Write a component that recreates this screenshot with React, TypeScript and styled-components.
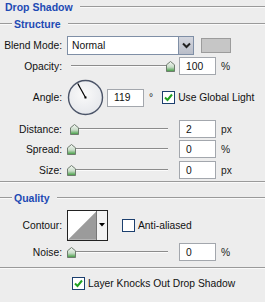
import { createGlobalStyle } from "styled-components";
import styled from "styled-components";

const GlobalStyle = createGlobalStyle`
  html, body {
    margin: 0;
    padding: 0;
    background: #ededed;
  }
`;

const Panel = styled.div`
  width: 265px;
  height: 302px;
  overflow: hidden;
  background: #ededed;
  font-family: "Liberation Sans", Arial, sans-serif;
  font-size: 10.3px;
  color: #111;
  display: flex;
  flex-direction: column;
`;

const Legend = styled.div<{ $top: number; $indent?: boolean }>`
  display: flex;
  align-items: center;
  height: 14px;
  margin-top: ${(p) => p.$top}px;
  padding-left: ${(p) => (p.$indent ? 0 : 5)}px;
`;

const Rule = styled.div<{ $width?: number }>`
  height: 1px;
  background: #9a9a9a;
  border-bottom: 1px solid #fafafa;
  ${(p) => (p.$width ? `width: ${p.$width}px;` : "flex: 1;")}
`;

const LegendText = styled.span<{ $big?: boolean }>`
  color: #1d4ab4;
  font-weight: bold;
  font-size: 10.5px;
  margin: 0 7px 0 ${(p) => (p.$big ? 0 : 2)}px;
  white-space: nowrap;
`;

const Row = styled.div<{ $top: number; $height: number }>`
  display: grid;
  grid-template-columns: 62px auto;
  column-gap: 5px;
  align-items: center;
  height: ${(p) => p.$height}px;
  margin-top: ${(p) => p.$top}px;
`;

const Label = styled.span`
  text-align: right;
  white-space: nowrap;
`;

const Controls = styled.div`
  display: flex;
  align-items: center;
`;

const SelectBox = styled.div`
  width: 106px;
  height: 17px;
  border: 1px solid #7f8fa6;
  background: #fff;
  display: flex;
  align-items: center;
  padding-left: 4px;
`;

const SelectButton = styled.div`
  width: 15px;
  height: 19px;
  box-sizing: border-box;
  border: 1px solid #7f8fa6;
  border-left: none;
  background: linear-gradient(#d4d7df, #b9bdc8);
  display: flex;
  align-items: center;
  justify-content: center;
`;

const Swatch = styled.div`
  width: 28px;
  height: 13px;
  margin-left: 7px;
  background: #c6c6c6;
  border: 1px solid #9c9c9c;
`;

const SliderBox = styled.div`
  position: relative;
  width: 108px;
  height: 18px;
`;

const Track = styled.div`
  position: absolute;
  left: 4px;
  right: 7px;
  top: 8px;
  height: 1px;
  background: #8c8c8c;
  border-bottom: 1px solid #fbfbfb;
`;

const Thumb = styled.svg`
  position: absolute;
  top: 4px;
`;

const NumInput = styled.div<{ $gap?: number }>`
  height: 16px;
  width: 29px;
  margin-left: ${(p) => p.$gap ?? 4}px;
  background: #fff;
  border: 1px solid #a3a7ad;
  display: flex;
  align-items: center;
  padding-left: 6px;
`;

const Unit = styled.span`
  margin-left: 5px;
  color: #222;
`;

const CheckWrap = styled.label<{ $gap: number }>`
  display: flex;
  align-items: center;
  margin-left: ${(p) => p.$gap}px;
  white-space: nowrap;
`;

const Box = styled.span`
  width: 11px;
  height: 11px;
  border: 1px solid #1c3f6e;
  background: #fff;
  margin-right: 3px;
  display: flex;
  align-items: center;
  justify-content: center;
`;

const ContourBox = styled.div`
  display: flex;
  width: 41px;
  height: 31px;
  box-sizing: border-box;
  border: 1px solid #222;
  background: #fff;
`;

const ContourArrow = styled.div`
  width: 10px;
  border-left: 1px solid #777;
  background: #f3f3f3;
  display: flex;
  align-items: center;
  justify-content: center;
`;

const CheckRow = styled.div`
  display: flex;
  align-items: center;
  height: 13px;
  margin-top: 8px;
  padding-left: 72px;
`;

function Slider({ value }: { value: number }) {
  const left = (value / 100) * 99;
  return (
    <SliderBox>
      <Track />
      <Thumb width="9" height="11" viewBox="0 0 9 11" style={{ left }}>
        <defs>
          <linearGradient id="tg" x1="0" y1="0" x2="0" y2="1">
            <stop offset="0" stopColor="#f4f7f4" />
            <stop offset="0.55" stopColor="#c8dcc8" />
            <stop offset="1" stopColor="#3c9a3c" />
          </linearGradient>
        </defs>
        <path
          d="M4.5 0.5 L8.5 3.8 L8.5 10.5 L0.5 10.5 L0.5 3.8 Z"
          fill="url(#tg)"
          stroke="#6f7c6f"
          strokeWidth="1"
        />
      </Thumb>
    </SliderBox>
  );
}

function Check({ checked, text, gap }: { checked: boolean; text: string; gap: number }) {
  return (
    <CheckWrap $gap={gap}>
      <Box>
        {checked && (
          <svg width="9" height="9" viewBox="0 0 9 9">
            <path d="M1 4.5 L3.5 7 L8 1.5" fill="none" stroke="#21a121" strokeWidth="2" />
          </svg>
        )}
      </Box>
      {text}
    </CheckWrap>
  );
}

function Dial({ angle }: { angle: number }) {
  const r = (angle * Math.PI) / 180;
  const cx = 18.5;
  const cy = 18.5;
  const x = cx + Math.cos(r) * 16;
  const y = cy - Math.sin(r) * 16;
  return (
    <svg width="37" height="37" viewBox="0 0 37 37">
      <defs>
        <radialGradient id="dg" cx="0.45" cy="0.4" r="0.6">
          <stop offset="0" stopColor="#fafafa" />
          <stop offset="1" stopColor="#e6e8ec" />
        </radialGradient>
      </defs>
      <circle cx={cx} cy={cy} r="17" fill="url(#dg)" stroke="#4b5468" strokeWidth="1.4" />
      <line x1={cx} y1={cy} x2={x} y2={y} stroke="#000" strokeWidth="1.2" />
      <rect x={cx - 1} y={cy - 1} width="2" height="2" fill="#000" />
    </svg>
  );
}

export default function App() {
  return (
    <Panel>
      <GlobalStyle />
      <Legend $top={0}>
        <LegendText $big>Drop Shadow</LegendText>
        <Rule />
      </Legend>
      <Legend $top={3} $indent>
        <Rule $width={12} />
        <LegendText>Structure</LegendText>
        <Rule />
      </Legend>

      <Row $top={5} $height={19}>
        <Label>Blend Mode:</Label>
        <Controls>
          <SelectBox>Normal</SelectBox>
          <SelectButton>
            <svg width="9" height="7" viewBox="0 0 9 7">
              <path d="M1 1.5 L4.5 5 L8 1.5" fill="none" stroke="#222" strokeWidth="2" />
            </svg>
          </SelectButton>
          <Swatch />
        </Controls>
      </Row>

      <Row $top={2} $height={18}>
        <Label>Opacity:</Label>
        <Controls>
          <Slider value={100} />
          <NumInput>100</NumInput>
          <Unit>%</Unit>
        </Controls>
      </Row>

      <Row $top={4} $height={37}>
        <Label>Angle:</Label>
        <Controls>
          <Dial angle={119} />
          <NumInput $gap={3}>119</NumInput>
          <Unit>°</Unit>
          <Check checked text="Use Global Light" gap={9} />
        </Controls>
      </Row>

      <Row $top={4} $height={18}>
        <Label>Distance:</Label>
        <Controls>
          <Slider value={3} />
          <NumInput>2</NumInput>
          <Unit>px</Unit>
        </Controls>
      </Row>
      <Row $top={2} $height={18}>
        <Label>Spread:</Label>
        <Controls>
          <Slider value={0} />
          <NumInput>0</NumInput>
          <Unit>%</Unit>
        </Controls>
      </Row>
      <Row $top={3} $height={18}>
        <Label>Size:</Label>
        <Controls>
          <Slider value={0} />
          <NumInput>0</NumInput>
          <Unit>px</Unit>
        </Controls>
      </Row>

      <Legend $top={2} $indent style={{ height: 2 }}>
        <Rule />
      </Legend>

      <Legend $top={8} $indent>
        <Rule $width={12} />
        <LegendText>Quality</LegendText>
        <Rule />
      </Legend>

      <Row $top={4} $height={32}>
        <Label>Contour:</Label>
        <Controls>
          <ContourBox>
            <svg width="29" height="29" viewBox="0 0 29 29">
              <path d="M0 29 L29 0 L29 29 Z" fill="#9b9b9b" />
            </svg>
            <ContourArrow>
              <svg width="6" height="4" viewBox="0 0 6 4">
                <path d="M0 0 L6 0 L3 3.5 Z" fill="#000" />
              </svg>
            </ContourArrow>
          </ContourBox>
          <Check checked={false} text="Anti-aliased" gap={14} />
        </Controls>
      </Row>

      <Row $top={2} $height={18}>
        <Label>Noise:</Label>
        <Controls>
          <Slider value={0} />
          <NumInput>0</NumInput>
          <Unit>%</Unit>
        </Controls>
      </Row>

      <Legend $top={6} $indent style={{ height: 2 }}>
        <Rule />
      </Legend>

      <CheckRow>
        <Check checked text="Layer Knocks Out Drop Shadow" gap={0} />
      </CheckRow>
    </Panel>
  );
}
